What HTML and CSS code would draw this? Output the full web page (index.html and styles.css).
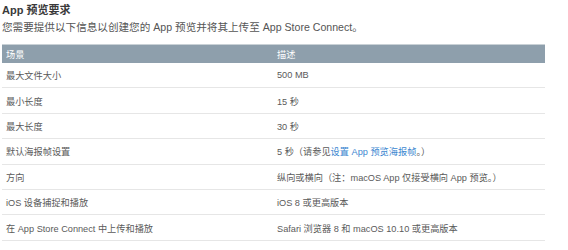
FILE: index.html
```html
<!DOCTYPE html>
<html lang="zh-CN">
<head>
<meta charset="utf-8">
<title>App 预览要求</title>
<link rel="stylesheet" href="styles.css">
</head>
<body>
<div class="page">
  <h2 class="title">App 预览要求</h2>
  <p class="intro">您需要提供以下信息以创建您的 App 预览并将其上传至 App Store Connect。</p>
  <table class="spec">
    <thead>
      <tr><th class="c1">场景</th><th class="c2">描述</th></tr>
    </thead>
    <tbody>
      <tr><td>最大文件大小</td><td>500 MB</td></tr>
      <tr><td>最小长度</td><td>15 秒</td></tr>
      <tr><td>最大长度</td><td>30 秒</td></tr>
      <tr><td>默认海报帧设置</td><td>5 秒（请参见<a href="#" class="link">设置 App 预览海报帧</a>。）</td></tr>
      <tr><td>方向</td><td>纵向或横向（注：macOS App 仅接受横向 App 预览。）</td></tr>
      <tr><td>iOS 设备捕捉和播放</td><td>iOS 8 或更高版本</td></tr>
      <tr><td>在 App Store Connect 中上传和播放</td><td>Safari 浏览器 8 和 macOS 10.10 或更高版本</td></tr>
    </tbody>
  </table>
</div>
</body>
</html>
```

FILE: styles.css
```css
html, body {
  margin: 0;
  padding: 0;
  background: #ffffff;
}
body {
  font-family: "Liberation Sans", "Noto Sans CJK SC", sans-serif;
  color: #555555;
}
.page {
  padding: 2px 0 0 2px;
  width: 544px;
}
.title {
  margin: 0;
  font-size: 11px;
  line-height: 16px;
  font-weight: 600;
  color: #3a3a3a;
}
.intro {
  margin: 1px 0 0;
  font-size: 10.6px;
  line-height: 17px;
  color: #555555;
}
.spec {
  margin-top: 8px;
  width: 543px;
  border-collapse: collapse;
  font-size: 9.2px;
}
.spec th {
  background: #8e9fac;
  color: #ffffff;
  font-weight: normal;
  text-align: left;
  height: 18px;
  padding: 0 0 0 4px;
  border-top: 1px solid #c9d1d6;
}
.spec th.c1, .spec td:first-child {
  width: 262px;
}
.spec th.c2, .spec td:nth-child(2) {
  padding-left: 9px;
}
.spec td {
  height: 24.4px;
  padding: 0 0 0 4px;
  border-bottom: 1px solid #e6e6e6;
  vertical-align: middle;
  color: #5a5a5a;
}
.link {
  color: #3c87d0;
  text-decoration: none;
}
```
